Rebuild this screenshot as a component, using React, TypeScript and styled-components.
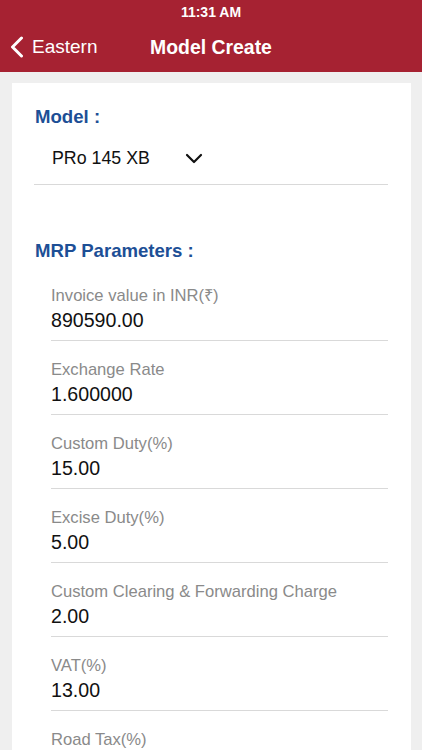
import * as React from 'react';
import styled, { createGlobalStyle } from 'styled-components';

const GlobalStyle = createGlobalStyle`
  html, body {
    margin: 0;
    padding: 0;
    background: #efefef;
    font-family: 'Liberation Sans', Arial, sans-serif;
  }
`;

interface FieldModel {
  label: string;
  value: string;
}

const fields: FieldModel[] = [
  { label: 'Invoice value in INR(₹)', value: '890590.00' },
  { label: 'Exchange Rate', value: '1.600000' },
  { label: 'Custom Duty(%)', value: '15.00' },
  { label: 'Excise Duty(%)', value: '5.00' },
  { label: 'Custom Clearing & Forwarding Charge', value: '2.00' },
  { label: 'VAT(%)', value: '13.00' },
  { label: 'Road Tax(%)', value: '' },
];

const Screen = styled.div`
  width: 422px;
  height: 750px;
  overflow: hidden;
  display: flex;
  flex-direction: column;
  background: #efefef;
`;

const Header = styled.header`
  background: #a62232;
  color: #fff;
  height: 72px;
  flex-shrink: 0;
  display: flex;
  flex-direction: column;
`;

const StatusBar = styled.div`
  height: 24px;
  display: flex;
  align-items: center;
  justify-content: center;
  font-size: 14px;
  font-weight: bold;
`;

const NavBar = styled.div`
  height: 46px;
  display: grid;
  grid-template-columns: 1fr auto 1fr;
  align-items: center;
  padding: 0 10px;
`;

const BackButton = styled.div`
  display: flex;
  align-items: center;
  gap: 8px;
  font-size: 19px;
`;

const Title = styled.div`
  font-size: 19.4px;
  font-weight: bold;
`;

const Card = styled.main`
  flex: 1;
  margin: 11px 11px 0 12px;
  background: #fff;
  padding: 22px 23px 0 22px;
`;

const SectionTitle = styled.div`
  color: #1d4f96;
  font-weight: bold;
  font-size: 18.6px;
  line-height: 24px;
  padding-left: 1px;
`;

const Dropdown = styled.div`
  margin-top: 17px;
  padding: 0 0 14px 18px;
  border-bottom: 1px solid #d9d9d9;
  display: flex;
  align-items: center;
  gap: 35px;
  font-size: 17.8px;
  line-height: 24px;
  color: #111;
`;

const Parameters = styled.section`
  margin-top: 54px;
`;

const FieldList = styled.div`
  padding-left: 17px;
  margin-top: 4px;
`;

const Field = styled.div`
  padding: 17px 0 8px;
  border-bottom: 1px solid #d9d9d9;
`;

const Label = styled.div`
  color: #8a8a8a;
  font-size: 16.6px;
  line-height: 24px;
`;

const Value = styled.div`
  color: #111;
  font-size: 19.6px;
  line-height: 24px;
`;

const Chevron = () => (
  <svg width="18" height="11" viewBox="0 0 18 11">
    <path d="M2 2 L9 9 L16 2" fill="none" stroke="#111" strokeWidth="2.2" strokeLinecap="round" strokeLinejoin="round" />
  </svg>
);

const BackArrow = () => (
  <svg width="14" height="22" viewBox="0 0 14 22">
    <path d="M11.5 2 L2.5 11 L11.5 20" fill="none" stroke="#fff" strokeWidth="3" strokeLinecap="round" strokeLinejoin="round" />
  </svg>
);

export default function App() {
  return (
    <Screen>
      <GlobalStyle />
      <Header>
        <StatusBar>11:31 AM</StatusBar>
        <NavBar>
          <BackButton>
            <BackArrow />
            <span>Eastern</span>
          </BackButton>
          <Title>Model Create</Title>
          <div />
        </NavBar>
      </Header>
      <Card>
        <SectionTitle>Model :</SectionTitle>
        <Dropdown>
          <span>PRo 145 XB</span>
          <Chevron />
        </Dropdown>
        <Parameters>
          <SectionTitle>MRP Parameters :</SectionTitle>
          <FieldList>
            {fields.map((f) => (
              <Field key={f.label}>
                <Label>{f.label}</Label>
                <Value>{f.value || '\u00a0'}</Value>
              </Field>
            ))}
          </FieldList>
        </Parameters>
      </Card>
    </Screen>
  );
}
